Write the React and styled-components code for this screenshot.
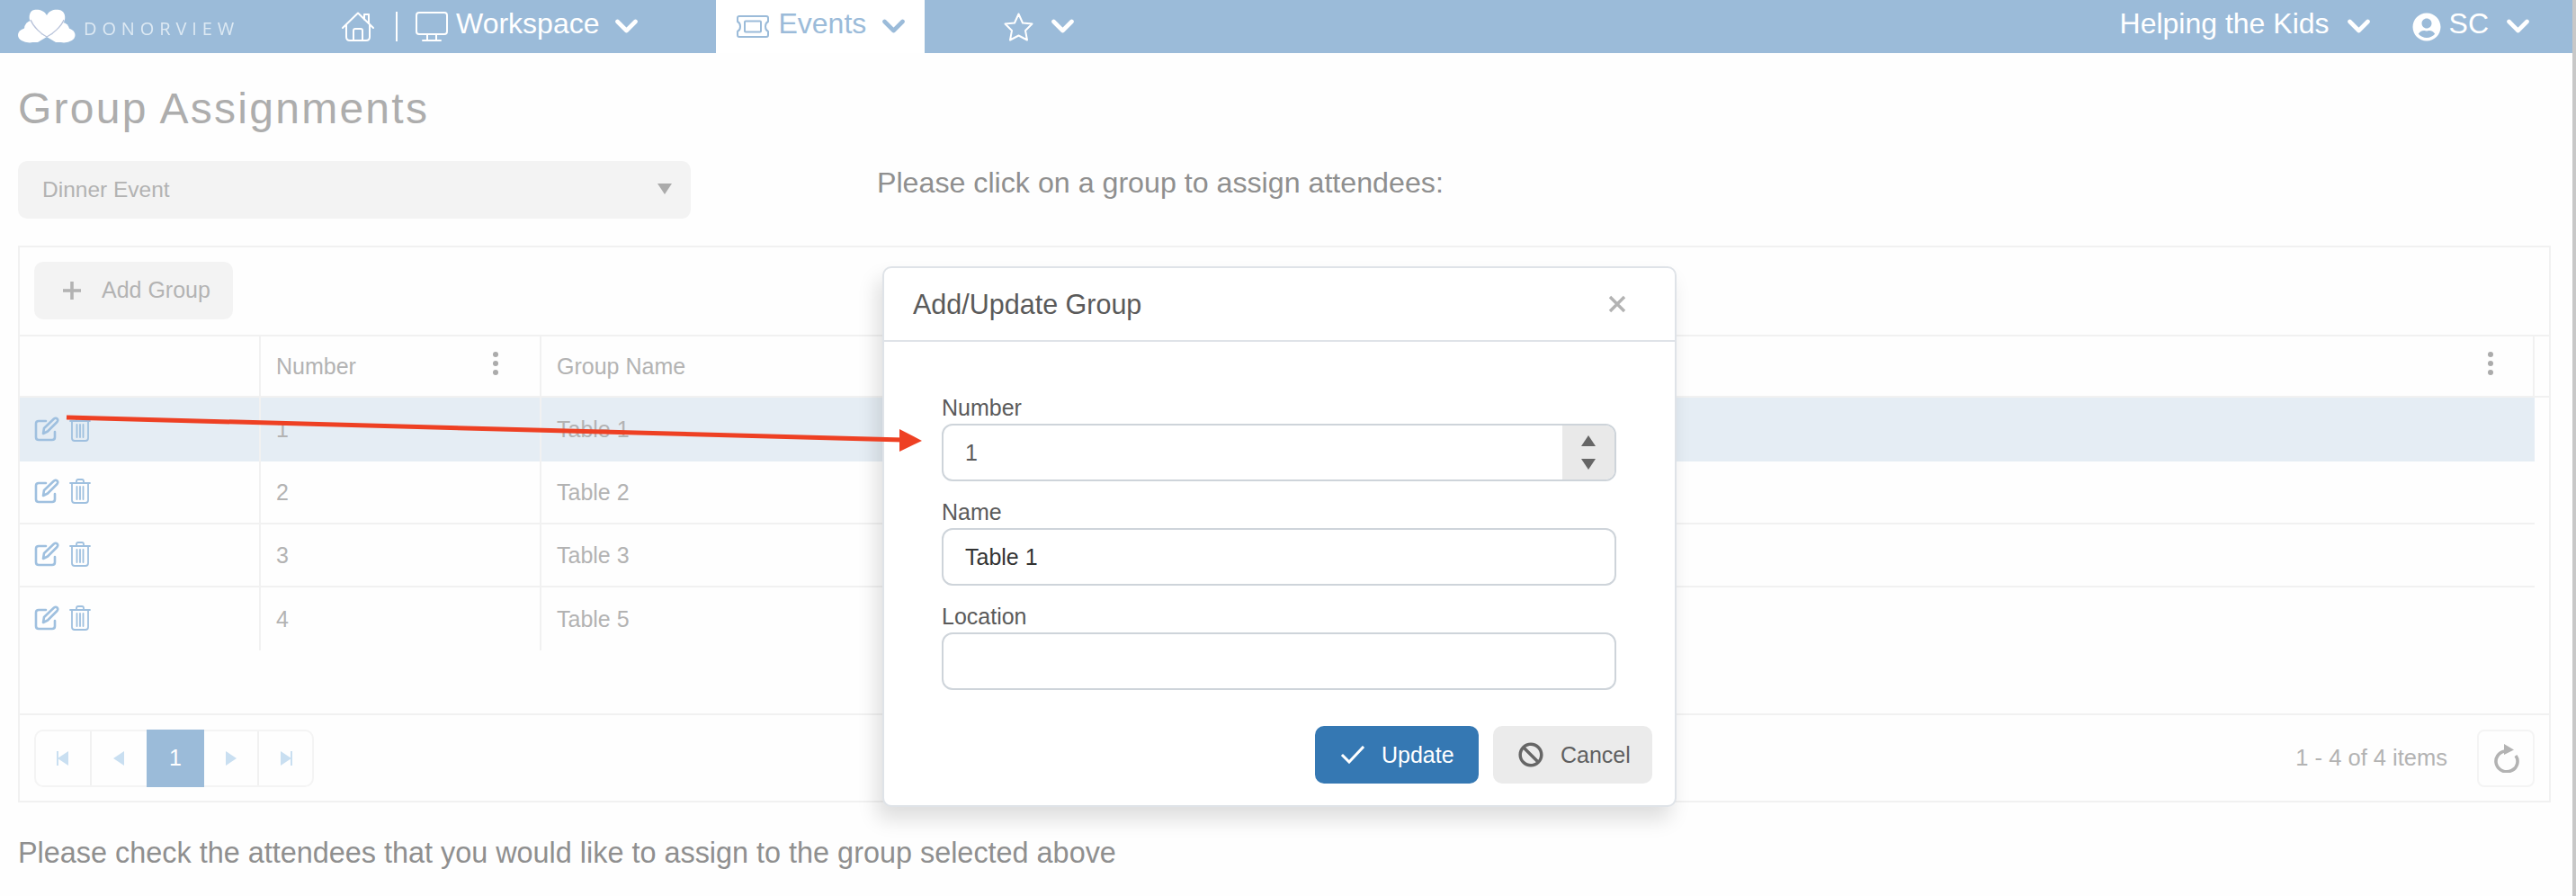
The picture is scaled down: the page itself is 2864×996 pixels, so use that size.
import React from 'react';
import styled, { createGlobalStyle } from 'styled-components';
import { FaUserCircle, FaBan } from 'react-icons/fa';

const NAV_BLUE = '#9bbbd9';

const GlobalStyle = createGlobalStyle`
    * {
        box-sizing: border-box;
    }
    html, body {
        margin: 0;
        padding: 0;
        overflow: hidden;
        background: #fefefe;
        font-family: "Liberation Sans", Arial, sans-serif;
    }
`;

const Page = styled.div`
    position: relative;
    display: flex;
    width: 2864px;
    height: 996px;
    overflow: hidden;
`;

const Main = styled.div`
    width: 2860px;
    flex: none;
`;

const ScrollTrack = styled.div`
    width: 4px;
    flex: none;
    background: #c8c8c8;
`;

// Top navigation
const Nav = styled.nav`
    display: flex;
    align-items: stretch;
    height: 59px;
    padding: 0 48px 0 20px;
    background: ${NAV_BLUE};
    color: #fff;
    font-size: 32px;
`;

const Brand = styled.div`
    display: flex;
    align-items: center;
    width: 360px;
`;

const BrandName = styled.span`
    margin: 3px 0 0 7px;
    font-family: "Open Sans", sans-serif;
    font-size: 20px;
    letter-spacing: 5.9px;
    color: #dde9f3;
    filter: blur(0.4px);
`;

const NavGroup = styled.div`
    display: flex;
    align-items: center;
`;

const NavDivider = styled.span`
    width: 2px;
    height: 33px;
    margin: 0 20px 0 24px;
    background: #fff;
`;

const NavText = styled.span`
    margin: 0 ${(p) => p.$after || 20}px 7px ${(p) => p.$gap || 10}px;
    line-height: 36px;
`;

const NavChevron = styled.svg`
    flex: none;
    margin-bottom: 2px;
`;

const EventsTab = styled.div`
    display: flex;
    align-items: center;
    width: 232px;
    margin-left: 87px;
    padding-left: 23px;
    background: #fff;
    color: ${NAV_BLUE};
`;

const Favorites = styled.div`
    display: flex;
    align-items: center;
    gap: 20px;
    margin-left: 88px;
`;

const NavRight = styled.div`
    display: flex;
    align-items: center;
    margin-left: auto;
`;

const UserBlock = styled.div`
    display: flex;
    align-items: center;
    margin-left: 47px;
`;

// Page content
const Content = styled.div`
    padding: 34px 24px 0 20px;
`;

const Title = styled.h1`
    margin: 0 0 30px;
    font-size: 48px;
    line-height: 56px;
    font-weight: 400;
    letter-spacing: 2.25px;
    color: #adadad;
`;

const FilterRow = styled.div`
    display: flex;
    gap: 207px;
    margin-bottom: 30px;
`;

const SelectBox = styled.div`
    display: flex;
    align-items: center;
    justify-content: space-between;
    width: 748px;
    height: 64px;
    padding: 0 21px 0 27px;
    border-radius: 10px;
    background: #f3f3f3;
    color: #b2b2b2;
    font-size: 24.5px;
`;

const SelectCaret = styled.span`
    width: 0;
    height: 0;
    margin-top: -3px;
    border-left: 8px solid transparent;
    border-right: 8px solid transparent;
    border-top: 12px solid #ababab;
`;

const Hint = styled.p`
    margin: 4px 0 0;
    font-size: 32.2px;
    line-height: 40px;
    color: #8f8f8f;
`;

const BottomHint = styled(Hint)`
    margin: 36px 0 0;
    font-size: 32.4px;
`;

// Data grid
const Grid = styled.div`
    height: 619px;
    border: 2px solid #f1f1f1;
    color: #b3b3b3;
    font-size: 25px;
`;

const Toolbar = styled.div`
    display: flex;
    align-items: center;
    height: 99px;
    padding: 0 16px 2px;
    border-bottom: 2px solid #f1f1f1;
`;

const AddButton = styled.div`
    display: flex;
    align-items: center;
    gap: 23px;
    width: 221px;
    height: 64px;
    padding-left: 32px;
    border-radius: 10px;
    background: #f3f3f3;
`;

const HeaderRow = styled.div`
    display: grid;
    grid-template-columns: 266px 312px 1fr;
    height: 68px;
    padding-right: 16px;
    border-bottom: 2px solid #f1f1f1;
`;

const HeaderCell = styled.div`
    display: flex;
    align-items: center;
    justify-content: space-between;
    padding: 0 ${(p) => p.$pad || 28}px 0 17px;
    border-left: ${(p) => (p.$first ? 'none' : '2px solid #f1f1f1')};
    border-right: ${(p) => (p.$last ? '2px solid #f1f1f1' : 'none')};
`;

const KebabDots = styled.span`
    display: flex;
    flex-direction: column;
    gap: 3.5px;
    margin-top: -6px;
`;

const Dot = styled.i`
    display: block;
    width: 6.5px;
    height: 6.5px;
    border-radius: 50%;
    background: #ababab;
`;

const Body = styled.div`
    height: 353px;
    padding-right: 16px;
    border-bottom: 2px solid #f1f1f1;
`;

const Row = styled.div`
    display: grid;
    grid-template-columns: 266px 312px 1fr;
    height: ${(p) => (p.$selected ? 71 : 70)}px;
    border-bottom: ${(p) => (p.$plain ? 'none' : '2px solid #f1f1f1')};
    background: ${(p) => (p.$selected ? '#e5edf4' : 'transparent')};
`;

const Cell = styled.div`
    display: flex;
    align-items: center;
    padding-left: 17px;
    border-left: 2px solid #f1f1f1;
`;

const ActionCell = styled.div`
    display: flex;
    align-items: center;
    gap: 11px;
    padding: 0 0 2px 16px;
`;

const GridFooter = styled.div`
    display: flex;
    align-items: center;
    justify-content: space-between;
    height: 95px;
    padding: 0 16px;
`;

const Pager = styled.div`
    display: flex;
    width: 311px;
    height: 64px;
    border: 2px solid #f4f4f4;
    border-radius: 10px;
`;

const PagerCell = styled.div`
    display: flex;
    align-items: center;
    justify-content: center;
    width: ${(p) => p.$w}px;
    margin: ${(p) => (p.$active ? '-2px 0' : '0')};
    border-right: ${(p) => (p.$line ? '2px solid #f1f1f1' : 'none')};
    background: ${(p) => (p.$active ? NAV_BLUE : 'transparent')};
    color: #fff;
`;

const FooterRight = styled.div`
    display: flex;
    align-items: center;
    gap: 33px;
`;

const ItemCount = styled.span`
    font-size: 25.5px;
`;

const RefreshButton = styled.div`
    display: flex;
    align-items: center;
    justify-content: center;
    width: 64px;
    height: 64px;
    border: 2px solid #f4f4f4;
    border-radius: 8px;
`;

// Dialog sits above the page
const Dialog = styled.div`
    position: absolute;
    left: 981px;
    top: 296px;
    width: 883px;
    height: 601px;
    border: 2px solid #dfe3e8;
    border-radius: 10px;
    background: #fff;
    box-shadow: -6px 14px 22px rgba(0, 0, 0, 0.13);
    color: #5a5a5a;
`;

const DialogHeader = styled.div`
    display: flex;
    align-items: center;
    justify-content: space-between;
    height: 82px;
    padding: 0 54px 0 32px;
    border-bottom: 2px solid #dfe3e8;
    font-size: 30.5px;
`;

const DialogForm = styled.div`
    padding: 58px 65px 0 64px;
`;

const Field = styled.div`
    margin-bottom: 19px;
`;

const FieldLabel = styled.label`
    display: block;
    height: 30px;
    margin-bottom: 3px;
    font-size: 25px;
    line-height: 30px;
`;

const InputBox = styled.div`
    display: flex;
    align-items: center;
    justify-content: space-between;
    height: 64px;
    padding-left: 24px;
    overflow: hidden;
    border: 2px solid #ced4da;
    border-radius: 12px;
    font-size: 25px;
    color: ${(p) => (p.$dark ? '#333' : '#5a5a5a')};
`;

const Spinner = styled.div`
    display: flex;
    flex-direction: column;
    align-items: center;
    justify-content: center;
    gap: 14px;
    width: 58px;
    height: 100%;
    background: #e9e9e9;
`;

const SpinArrow = styled.span`
    width: 0;
    height: 0;
    border-left: 8.5px solid transparent;
    border-right: 8.5px solid transparent;
    ${(p) => (p.$down ? 'border-top' : 'border-bottom')}: 12px solid #666;
`;

const DialogFooter = styled.div`
    display: flex;
    justify-content: flex-end;
    gap: 16px;
    margin-top: 40px;
    padding-right: 25px;
`;

const ActionButton = styled.div`
    display: flex;
    align-items: center;
    gap: ${(p) => (p.$primary ? 18 : 19)}px;
    width: ${(p) => (p.$primary ? 182 : 177)}px;
    height: 64px;
    padding-left: 28px;
    border-radius: 10px;
    background: ${(p) => (p.$primary ? '#3578b3' : '#ebebeb')};
    color: ${(p) => (p.$primary ? '#fff' : '#5f5f5f')};
    font-size: 25px;
`;

const ArrowOverlay = styled.svg`
    position: absolute;
    left: 0;
    top: 0;
    pointer-events: none;
`;

const Chevron = () => (
    <NavChevron width={25} height={16} viewBox="0 0 25 16" fill="none" stroke="currentColor" strokeWidth="4.6" strokeLinecap="round" strokeLinejoin="round">
        <path d="M2.5 3 L12.5 13 L22.5 3" />
    </NavChevron>
);

const Logo = () => (
    <svg width="66" height="40" viewBox="0 0 66 40" style={{ filter: 'blur(0.7px)' }}>
        <g fill="#fff">
            <path d="M32 7 C29 1 22 0 18 1 C13 2 12 8 13 12 C15 20 26 28 32 31 C38 28 50 20 52 12 C53 7 51 2 46 1 C41 0 35 1 32 7 Z" />
            <ellipse cx="13" cy="29" rx="13" ry="8.5" />
            <ellipse cx="15" cy="22" rx="8" ry="9" />
            <path d="M12 21 L32 31 L22 37 L12 37 Z" />
            <ellipse cx="51" cy="29" rx="12.5" ry="8.5" />
            <ellipse cx="49" cy="23" rx="8" ry="8" />
            <path d="M52 21 L32 31 L42 37 L52 37 Z" />
        </g>
        <path fill="none" stroke="#b9c3da" strokeWidth="1.3" d="M14 12 C17 20 26 28 32 31 C38 28 48 20 51 12" />
    </svg>
);

const HomeIcon = () => (
    <svg width="36" height="33" viewBox="0 0 36 33" fill="none" stroke="#fff" strokeWidth="2" strokeLinejoin="round" strokeLinecap="round">
        <path d="M1 18 L18 1.5 L35 18" />
        <path d="M25 8.5 V3 H30 V13" />
        <path d="M5 15 V28 Q5 32 9 32 H27 Q31 32 31 28 V15" />
        <path d="M13 32 V21 Q13 19 15 19 H21 Q23 19 23 21 V32" />
    </svg>
);

const MonitorIcon = () => (
    <svg width="36" height="33" viewBox="0 0 36 33" fill="none" stroke="#fff" strokeWidth="2" strokeLinejoin="round" strokeLinecap="round">
        <rect x="1" y="1" width="34" height="24" rx="3" />
        <path d="M13 25 V31 M23 25 V31 M8 32 H28" />
    </svg>
);

const TicketIcon = () => (
    <svg width="36" height="25" viewBox="0 0 36 25" fill="none" stroke={NAV_BLUE} strokeWidth="2" strokeLinejoin="round">
        <path d="M3 1 H33 Q35 1 35 3 V7 Q32 8.5 32 12.5 Q32 16.5 35 18 V22 Q35 24 33 24 H3 Q1 24 1 22 V18 Q4 16.5 4 12.5 Q4 8.5 1 7 V3 Q1 1 3 1 Z" />
        <rect x="9" y="6.5" width="18" height="12" rx="1" />
    </svg>
);

const StarIcon = () => (
    <svg width="33" height="32" viewBox="0 0 33 32" fill="none" stroke="#fff" strokeWidth="2" strokeLinejoin="round">
        <path d="M16.5 1.5 L21 11.5 L31.5 12.5 L24 20 L26 30.5 L16.5 25.5 L7 30.5 L9 20 L1.5 12.5 L12 11.5 Z" />
    </svg>
);

const PlusIcon = () => (
    <svg width="20" height="20" viewBox="0 0 20 20" fill="#b3b3b3">
        <rect x="8.2" y="0" width="3.6" height="20" />
        <rect x="0" y="8.2" width="20" height="3.6" />
    </svg>
);

const EditIcon = () => (
    <svg width="28" height="28" viewBox="0 0 28 28" fill="none" stroke="#9fc0df" strokeWidth="2.6" strokeLinecap="round" strokeLinejoin="round">
        <path d="M13 5 H5 Q2 5 2 8 V23 Q2 26 5 26 H20 Q23 26 23 23 V17" />
        <path d="M10 19 L11 13 L22 2.5 Q24 1 25.5 2.5 Q27 4 25.5 6 L15 16.5 Z" />
    </svg>
);

const TrashIcon = () => (
    <svg width="24" height="28" viewBox="0 0 24 28" fill="none" stroke="#9fc0df" strokeWidth="1.8" strokeLinecap="round" strokeLinejoin="round">
        <path d="M1 5 H23" />
        <path d="M8 5 V3 Q8 1 10 1 H14 Q16 1 16 3 V5" />
        <path d="M3 5 V24 Q3 27 6 27 H18 Q21 27 21 24 V5" />
        <path d="M8.5 9 V23 M12 9 V23 M15.5 9 V23" />
    </svg>
);

const PageArrow = ({ left, bar }) => (
    <svg width="15" height="16" viewBox="0 0 15 16" fill="#c9dff1">
        {left ? <path d="M13 0 V16 L1 8 Z" /> : <path d="M2 0 V16 L14 8 Z" />}
        {bar && <rect x={left ? 0 : 13} y="0" width="2" height="16" />}
    </svg>
);

const RefreshIcon = () => (
    <svg width="30" height="32" viewBox="0 0 30 32" fill="none">
        <path d="M14 8 A12 11.5 0 1 0 26 13" stroke="#b3b3b3" strokeWidth="3.6" />
        <path d="M13 0 L24 6.5 L13 12 Z" fill="#b3b3b3" />
    </svg>
);

const CheckIcon = () => (
    <svg width="28" height="20" viewBox="0 0 28 20" fill="none" stroke="#fff" strokeWidth="3" strokeLinecap="square">
        <path d="M3 11 L10 18 L25 2" />
    </svg>
);

const CloseIcon = () => (
    <svg width="20" height="20" viewBox="0 0 20 20" fill="none" stroke="#b3b3b3" strokeWidth="3.4">
        <path d="M2 2 L18 18 M18 2 L2 18" />
    </svg>
);

const Kebab = () => (
    <KebabDots>
        <Dot />
        <Dot />
        <Dot />
    </KebabDots>
);

const groups = [
    { number: 1, name: 'Table 1' },
    { number: 2, name: 'Table 2' },
    { number: 3, name: 'Table 3' },
    { number: 4, name: 'Table 5' },
];

const App = () => (
    <Page>
        <GlobalStyle />
        <Main>
            <Nav>
                <Brand>
                    <Logo />
                    <BrandName>DONORVIEW</BrandName>
                </Brand>
                <NavGroup>
                    <HomeIcon />
                    <NavDivider />
                    <MonitorIcon />
                    <NavText $gap={9} $after={18}>Workspace</NavText>
                    <Chevron />
                </NavGroup>
                <EventsTab>
                    <TicketIcon />
                    <NavText $after={18}>Events</NavText>
                    <Chevron />
                </EventsTab>
                <Favorites>
                    <StarIcon />
                    <Chevron />
                </Favorites>
                <NavRight>
                    <NavText>Helping the Kids</NavText>
                    <Chevron />
                    <UserBlock>
                        <FaUserCircle size={32} />
                        <NavText $gap={9}>SC</NavText>
                        <Chevron />
                    </UserBlock>
                </NavRight>
            </Nav>
            <Content>
                <Title>Group Assignments</Title>
                <FilterRow>
                    <SelectBox>
                        Dinner Event
                        <SelectCaret />
                    </SelectBox>
                    <Hint>Please click on a group to assign attendees:</Hint>
                </FilterRow>
                <Grid>
                    <Toolbar>
                        <AddButton>
                            <PlusIcon />
                            Add Group
                        </AddButton>
                    </Toolbar>
                    <HeaderRow>
                        <HeaderCell $first />
                        <HeaderCell $pad={46}>
                            Number
                            <Kebab />
                        </HeaderCell>
                        <HeaderCell $last $pad={44}>
                            Group Name
                            <Kebab />
                        </HeaderCell>
                    </HeaderRow>
                    <Body>
                        {groups.map((group, i) => (
                            <Row key={group.number} $selected={i === 0} $plain={i === 0 || i === 3}>
                                <ActionCell>
                                    <EditIcon />
                                    <TrashIcon />
                                </ActionCell>
                                <Cell>{group.number}</Cell>
                                <Cell>{group.name}</Cell>
                            </Row>
                        ))}
                    </Body>
                    <GridFooter>
                        <Pager>
                            <PagerCell $w={62} $line><PageArrow left bar /></PagerCell>
                            <PagerCell $w={61}><PageArrow left /></PagerCell>
                            <PagerCell $w={64} $active>1</PagerCell>
                            <PagerCell $w={61} $line><PageArrow /></PagerCell>
                            <PagerCell $w={59}><PageArrow bar /></PagerCell>
                        </Pager>
                        <FooterRight>
                            <ItemCount>1 - 4 of 4 items</ItemCount>
                            <RefreshButton>
                                <RefreshIcon />
                            </RefreshButton>
                        </FooterRight>
                    </GridFooter>
                </Grid>
                <BottomHint>Please check the attendees that you would like to assign to the group selected above</BottomHint>
            </Content>
        </Main>
        <ScrollTrack />
        <Dialog>
            <DialogHeader>
                Add/Update Group
                <CloseIcon />
            </DialogHeader>
            <DialogForm>
                <Field>
                    <FieldLabel>Number</FieldLabel>
                    <InputBox>
                        1
                        <Spinner>
                            <SpinArrow />
                            <SpinArrow $down />
                        </Spinner>
                    </InputBox>
                </Field>
                <Field>
                    <FieldLabel>Name</FieldLabel>
                    <InputBox $dark>Table 1</InputBox>
                </Field>
                <Field>
                    <FieldLabel>Location</FieldLabel>
                    <InputBox />
                </Field>
            </DialogForm>
            <DialogFooter>
                <ActionButton $primary>
                    <CheckIcon />
                    Update
                </ActionButton>
                <ActionButton>
                    <FaBan size={28} color="#666" />
                    Cancel
                </ActionButton>
            </DialogFooter>
        </Dialog>
        <ArrowOverlay width="1100" height="560" viewBox="0 0 1100 560">
            <path d="M74 464 L1004 489" stroke="#ee4023" strokeWidth="5" fill="none" />
            <path d="M1000 477 L1025 490 L1000 502 Z" fill="#ee4023" />
        </ArrowOverlay>
    </Page>
);

export default App;
